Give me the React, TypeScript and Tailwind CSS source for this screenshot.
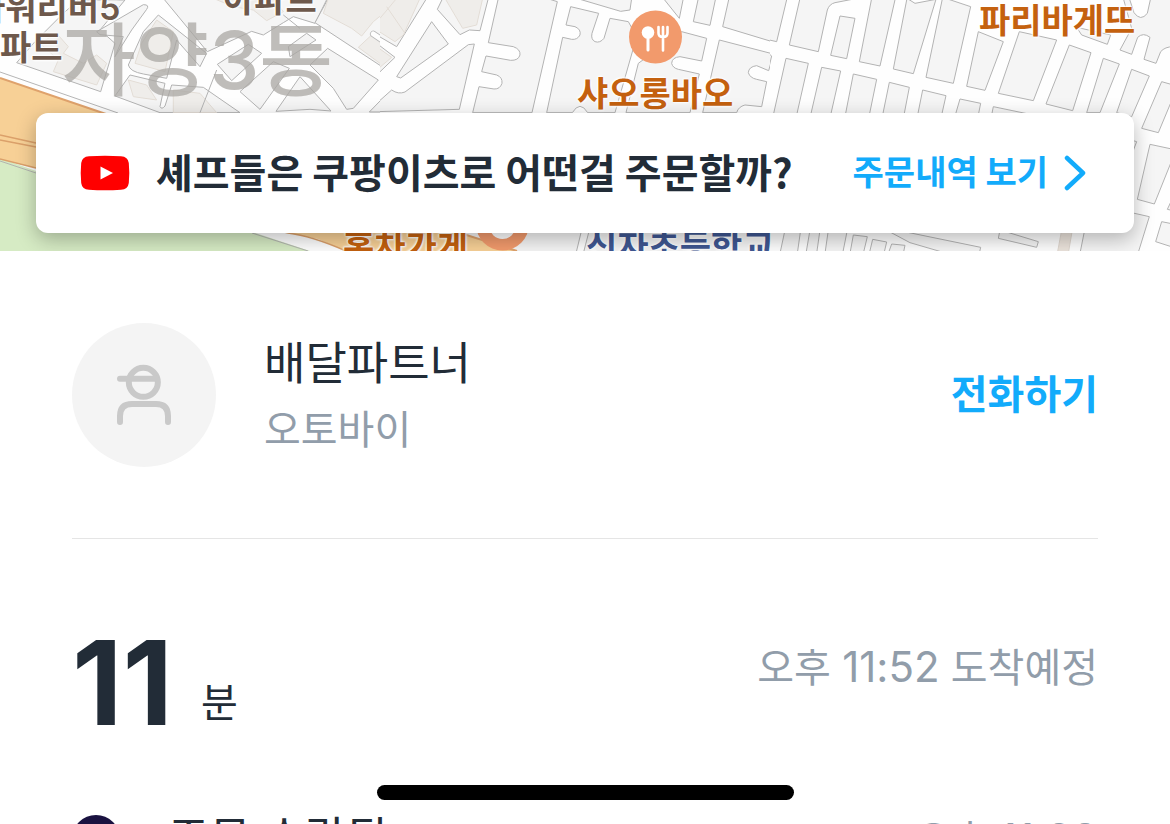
const parkAndHighway = (
  <g>
    <path d="M0 158L36 171L240 228L310 251H0Z" fill="#d6ebc4" />
    <path d="M0 161L36 173M252 233L308 251" stroke="#b3b5b0" />
    <path d="M0 78L103 113L460 233L517 251H346L318 239L288 233L36 168L0 159Z" fill="#f7d096" />
    <path d="M0 78L103 113L460 233L517 251" fill="none" stroke="#dfa26c" strokeWidth="2" />
    <path d="M0 135L36 143L300 215M0 140L36 147L300 220M0 159L36 168L288 233Q312 236 346 251" fill="none" stroke="#dba06a" strokeWidth="1.5" />
    <path d="M0 72L118 113" stroke="#b5b5b5" />
  </g>
);

const westBlocks = [
  "M50 188L105 125L190 40L235 0H375L300 90L345 130L302 275Z",
  "M290 95L430 14Q450 14 440 28L395 90L345 170L370 110L300 104Z",
  "M475 45L430 95L385 195Q390 215 430 222L500 235L530 120L600 200L620 160Z",
  "M345 288L390 225L495 250L480 320Q485 330 495 318L515 255L610 262L720 338H480Z",
  "M490 -5L622 155L755 94L790 105L850 68L880 50L945 70L982 -5Z",
  "M652 193L745 133L785 160L695 242Z",
  "M720 275L780 328L868 205L820 185Z",
  "M828 334L900 230L993 333L930 328Z",
  "M930 195L983 145L1135 240L1060 325L1040 328L1000 265Z",
  "M865 140L920 100L948 120L870 170Z",
  "M945 68L985 -5H1200V120L1155 206Z",
  "M1108 336L1172 270L1200 276V336Z",
  "M1188 232L1200 215V230Z",
];

const westBuildings = [
  "M120 130L170 100L205 140L190 160L250 190L290 165L320 190L290 255L160 215L175 180Z",
  "M425 130L470 60L520 95L495 215L405 190Z",
  "M385 240L440 255L470 300L400 290ZM520 270L600 280L650 338H520Z",
  "M970 40L1055 85L1085 108L1120 65L1200 0V-5H985Z",
  "M1075 142L1115 105L1190 155L1160 205Z",
  "M640 -5L700 20L760 30L800 62L850 35L820 -5Z",
];

const centerBlocks = [
  "M-10 -5H140L50 140L-10 105ZM-10 130L45 172L-10 225Z",
  "M172 28L188 -5H325L300 92L268 90L240 104Z",
  "M155 65L205 132L62 234L50 230Z",
  "M-10 310L35 270Q55 284 75 276L265 134L283 132L238 328L-10 335Z",
  "M355 -5L325 128L400 140Q422 148 420 165Q415 182 392 181L318 168L305 215L350 225Q368 232 366 250Q360 268 342 267L297 260L278 338H456L532 5L500 -5Z",
  "M572 20L558 75L585 80Q604 88 600 105Q592 120 575 118L548 112L500 338H577Q600 300 623 338H705L770 110L745 65L690 55L672 115Q660 130 645 125Q632 118 636 100L656 40Z",
  "M590 -5L722 34L750 30L755 -5Z",
  "M905 95L980 115L965 183L900 170Q876 172 875 190Q878 204 895 208L958 222L930 338H738L775 190Z",
  "M850 -5L910 -5L898 55ZM955 -5L940 65L990 76L1007 -5Z",
  "M1047 -5L1028 80L1180 126L1215 -5Z",
  "M1018 120L1180 162L1166 212L1130 197Q1106 200 1105 218Q1110 234 1130 238L1160 245L1145 320L1095 315Q1075 320 1070 338H968Z",
  "M605 690H-10V760H588ZM628 690H1200V760H610Z",
];

const eastBlocks = [
  "M-10 -5H51L20 125L-10 118Z",
  "M90 -5H262L195 8Q178 12 172 30L145 155L58 135Z",
  "M210 48L255 55L230 176L182 166Z",
  "M305 -5H376L330 198L268 185Z",
  "M411 -5L435 10L498 -2L430 221L370 207Z",
  "M518 -8L602 20L550 250L468 232Z",
  "M625 95L700 125L645 271L590 259Z",
  "M748 95L860 120L790 302L685 280Z",
  "M898 135L963 158L908 332L828 312Z",
  "M1000 175L1048 192L990 338H950Z",
  "M1085 208L1138 228L1085 350L1040 338Z",
  "M1175 245L1210 255V290L1165 398L1115 385Z",
  "M48 175L115 190L80 345H10Z",
  "M155 202L212 213L182 345H122Z",
  "M250 222L320 238L298 345H226Z",
  "M358 247L418 262L402 345H338Z",
  "M458 270L528 287L515 345H443Z",
  "M570 297L632 310L625 345H556Z",
  "M670 320L790 345H665Z",
  "M-5 160L5 168L-5 210Z",
  "M1140 433L1210 448V470L1153 612L1102 598Z",
  "M1050 410L1100 425L1060 530Z",
  "M1175 665L1210 672V742L1157 725Z",
  "M1210 590L1192 628L1210 632Z",
  "M960 610L1138 650L1104 760H930Z",
  "M920 82L1022 105L1012 133L935 105Z",
  "M1050 150L1085 163L1103 112Q1120 96 1140 112L1122 178L1158 190L1172 155Q1185 140 1210 140V-5H1142L1132 40Q1112 66 1092 38L1078 -5H1060L1085 85Z",
  "M45 690H92L82 760H30ZM120 690H150L140 760H108ZM175 690H232L218 760H165Z",
  "M250 705L292 710L280 760H240ZM308 718L350 726L342 760H298ZM365 732L405 736L400 760H355Z",
  "M330 680L632 742L628 760H530L420 728Z",
  "M690 690L805 725L800 742L685 715Z",
];

function MapCanvas() {
  return (
    <svg
      className="absolute inset-0 size-full"
      viewBox="0 0 1170 251"
      preserveAspectRatio="xMidYMid slice"
      aria-hidden="true"
    >
      <clipPath id="tile-west">
        <rect width="380" height="251" />
      </clipPath>
      <clipPath id="tile-center">
        <rect x="380" width="390" height="251" />
      </clipPath>
      <clipPath id="tile-east">
        <rect x="770" width="400" height="251" />
      </clipPath>
      <rect width="1170" height="251" fill="#fefefe" />
      <g fill="#f5f5f5" stroke="#b3b3b3" strokeWidth="3" strokeLinejoin="round">
        <g clipPath="url(#tile-west)">
          <g transform="scale(.33333)">
            {westBlocks.map((d) => (
              <path key={d} d={d} />
            ))}
            <g fill="#efedea" stroke="#e3ddd6">
              {westBuildings.map((d) => (
                <path key={d} d={d} />
              ))}
            </g>
            <path d="M1120 102L1200 155" stroke="#b8b8b8" strokeWidth="20" strokeLinecap="round" />
            <path d="M1120 102L1200 155" stroke="#fefefe" strokeWidth="15" strokeLinecap="round" />
            <path d="M600 338L650 210M850 45L900 85" fill="none" />
          </g>
        </g>
        <g clipPath="url(#tile-center)">
          <g transform="translate(380 0) scale(.33333)">
            {centerBlocks.map((d) => (
              <path key={d} d={d} />
            ))}
            <g fill="#efedea" stroke="#e3ddd6">
              <path d="M-10 -5H120L70 105L45 125L-10 90ZM195 -5L248 85L290 75L308 -5ZM-10 140L35 172L-10 210Z" />
              <path d="M0 55L50 -5M20 20L75 100" />
            </g>
          </g>
        </g>
        <g clipPath="url(#tile-east)">
          <g transform="translate(770 0) scale(.33333)">
            {eastBlocks.map((d) => (
              <path key={d} d={d} />
            ))}
            <path d="M875 690H907L895 760H862Z" fill="#ece4dc" stroke="#e0d8d0" />
          </g>
        </g>
      </g>
      {parkAndHighway}
      <g>
        <circle cx="655.500" cy="37" r="26.500" fill="#f29a6c" />
        <circle cx="648" cy="32.500" r="6.300" fill="#fff" />
        <path d="M648 36V50" stroke="#fff" strokeWidth="3" strokeLinecap="round" />
        <path d="M658.500 27V33Q658.500 37 663 37Q667.500 37 667.500 33V27M663 27V50.500" fill="none" stroke="#fff" strokeWidth="2.600" strokeLinecap="round" />
        <circle cx="502.500" cy="224" r="26.500" fill="#f29a6c" />
        <circle cx="502.500" cy="226" r="13" fill="#fff" />
      </g>
    </svg>
  );
}

const label =
  "absolute whitespace-nowrap font-semibold text-[34px] leading-[40px] [text-shadow:0_0_2px_#fff,0_0_3px_#fff,1px_1px_2px_#fff,-1px_-1px_2px_#fff]";

function MapLabels() {
  return (
    <div className="absolute inset-0">
      <span className={`${label} top-[-12px] left-[-26px] text-[#6e594c]`}>타워리버5</span>
      <span className={`${label} top-[28px] left-0 text-[#6e594c]`}>파트</span>
      <span className={`${label} top-[-20px] left-[223px] text-[#6e594c]`}>아파트</span>
      <span className="absolute top-[10px] left-[62px] text-[80px] leading-[100px] font-medium whitespace-nowrap text-[#a9a7a3]/75">
        자양3동
      </span>
      <span className={`${label} top-[74px] left-[577px] text-[#c4610f]`}>샤오롱바오</span>
      <span className={`${label} top-px left-[979px] text-[#c4610f]`}>파리바게뜨</span>
      <span className={`${label} top-[227px] left-[343px] text-[#c4610f]`}>홍차가게</span>
      <span className={`${label} top-[227px] left-[586px] text-[#3f5792]`}>신자초등학교</span>
    </div>
  );
}

function YoutubeIcon() {
  return (
    <svg className="h-9 w-[50px] shrink-0" viewBox="0 0 50 36" aria-hidden="true">
      <path d="M9 1.200Q25 .2 41 1.200Q48 1.600 48.800 8Q49.800 18 48.800 28Q48 34.400 41 34.800Q25 35.800 9 34.800Q2 34.400 1.200 28Q.2 18 1.200 8Q2 1.600 9 1.200Z" fill="#f00" />
      <path d="M20.500 11.500L33 18L20.500 24.500Z" fill="#fff" />
    </svg>
  );
}

function PartnerIcon() {
  return (
    <svg className="size-[90px]" viewBox="-3 0 270 270" fill="none" stroke="#c9c9c9" strokeWidth="18" strokeLinecap="round" aria-hidden="true">
      <circle cx="130" cy="97" r="43.500" />
      <path d="M60 86H166" />
      <path d="M60 216V198Q60 162 96 162H168Q204 162 204 198V216" />
    </svg>
  );
}

export default function App() {
  return (
    <main className="relative flex h-screen flex-col overflow-hidden bg-white font-['Inter','Noto_Sans_CJK_KR',sans-serif] text-[#222c37]">
      <section className="relative flex h-[251px] shrink-0 items-end overflow-hidden px-9 pb-[18px]" aria-label="지도">
        <MapCanvas />
        <MapLabels />
        <div className="relative flex h-[120px] flex-1 items-center rounded-xl bg-white pr-12 pl-11 font-['Noto_Sans_CJK_KR',sans-serif] shadow-[0_6px_20px_rgba(0,0,0,0.28)]">
          <YoutubeIcon />
          <p className="ml-[26px] flex-1 pb-1 text-[40px] leading-[60px] font-semibold whitespace-nowrap">
            셰프들은 쿠팡이츠로 어떤걸 주문할까?
          </p>
          <a href="#orders" className="flex items-center gap-4 text-[34px] leading-[60px] font-semibold whitespace-nowrap text-[#12abfb]">
            <span className="pb-1">주문내역 보기</span>
            <svg className="h-9 w-[22px]" viewBox="0 0 22 36" fill="none" stroke="currentColor" strokeWidth="4.500" strokeLinecap="round" strokeLinejoin="round" aria-hidden="true">
              <path d="M3 3L19 18L3 33" />
            </svg>
          </a>
        </div>
      </section>

      <section className="mx-[72px] flex shrink-0 items-center border-b border-[#e5e5e5] pt-[72px] pb-[71px]">
        <div className="flex size-36 items-center justify-center rounded-full bg-[#f4f4f4]">
          <PartnerIcon />
        </div>
        <div className="ml-12 flex-1 pt-1">
          <h1 className="text-[45px] leading-[66px] font-normal">배달파트너</h1>
          <p className="text-[40px] leading-[66px] text-[#919daa]">오토바이</p>
        </div>
        <button type="button" className="text-[40px] leading-[60px] font-semibold text-[#12abfb]">
          전화하기
        </button>
      </section>

      <section className="mx-[72px] flex shrink-0 items-start justify-between pt-[94px]">
        <p className="flex items-end gap-7">
          <span className="text-[117px] leading-[100px] font-bold">11</span>
          <span className="text-[40px] leading-[60px]">분</span>
        </p>
        <p className="mt-1 text-[40px] leading-[60px] text-[#919daa]">
          오후 <span className="text-[42px]">11:52</span> 도착예정
        </p>
      </section>

      <section className="mx-[72px] mt-[76px] flex shrink-0 items-start">
        <span className="mt-1.5 size-12 rounded-full bg-[#1a1240]" />
        <p className="ml-12 flex-1 text-[45px] leading-[60px]">주문 수락됨</p>
        <p className="text-[40px] leading-[60px] text-[#919daa]">
          오후 <span className="text-[42px]">11:38</span>
        </p>
      </section>

      <div className="absolute inset-x-0 bottom-6 flex justify-center">
        <span className="h-[15px] w-[417px] rounded-full bg-black" />
      </div>
    </main>
  );
}
